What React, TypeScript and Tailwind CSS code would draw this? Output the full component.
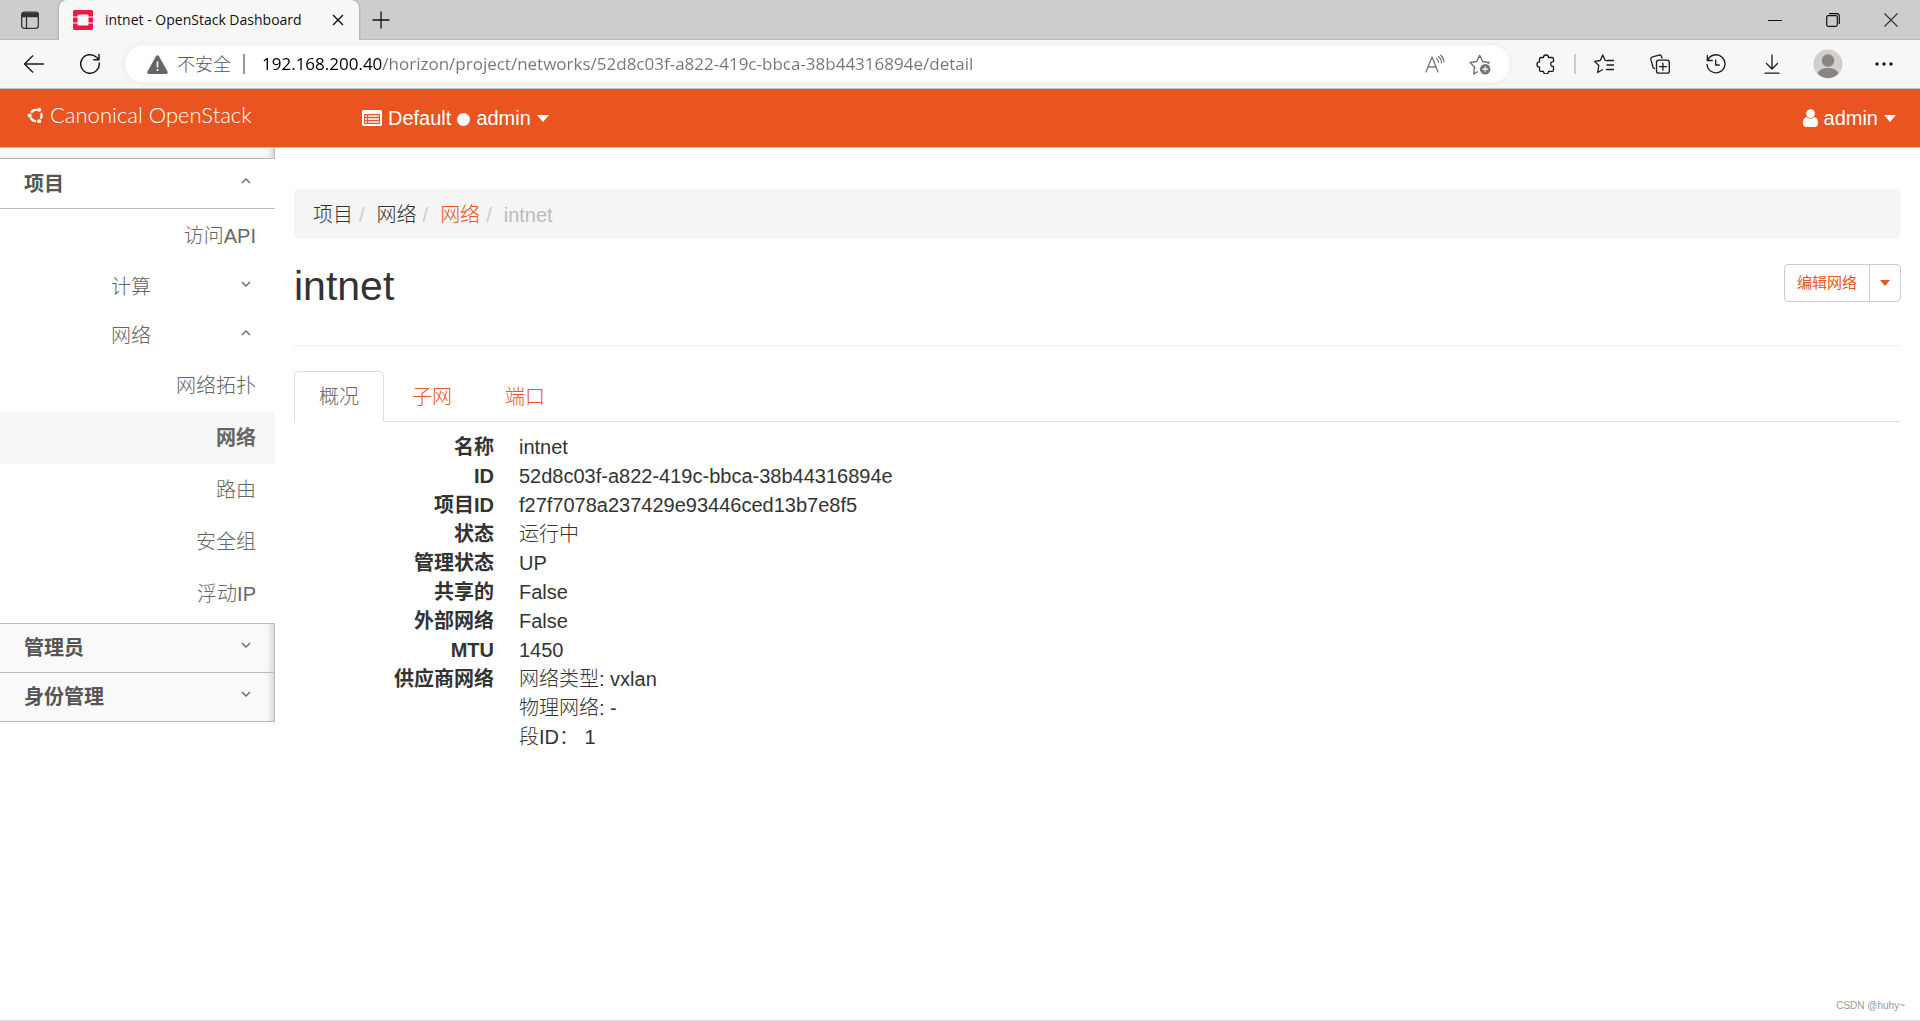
import { useState } from "react";
import type { ReactNode } from "react";
import clsx from "clsx";

interface NetworkField {
  label: string;
  values: string[];
}

const fields: NetworkField[] = [
  { label: "名称", values: ["intnet"] },
  { label: "ID", values: ["52d8c03f-a822-419c-bbca-38b44316894e"] },
  { label: "项目ID", values: ["f27f7078a237429e93446ced13b7e8f5"] },
  { label: "状态", values: ["运行中"] },
  { label: "管理状态", values: ["UP"] },
  { label: "共享的", values: ["False"] },
  { label: "外部网络", values: ["False"] },
  { label: "MTU", values: ["1450"] },
  { label: "供应商网络", values: ["网络类型: vxlan", "物理网络: -", "段ID： 1"] },
];

const networkPages = ["网络拓扑", "网络", "路由", "安全组", "浮动IP"];
const tabs = ["概况", "子网", "端口"];

function Icon({ size = 20, className, children }: { size?: number; className?: string; children: ReactNode }) {
  return (
    <svg
      width={size}
      height={size}
      viewBox="0 0 20 20"
      fill="none"
      stroke="currentColor"
      strokeWidth="1.3"
      strokeLinecap="round"
      strokeLinejoin="round"
      aria-hidden="true"
      className={clsx("shrink-0", className)}
    >
      {children}
    </svg>
  );
}

function Chevron({ up = false }: { up?: boolean }) {
  return (
    <svg width="10" height="8" viewBox="0 0 10 8" fill="none" stroke="#666" strokeWidth="1.4" aria-hidden="true">
      <path d={up ? "M1 6l4-4 4 4" : "M1 2l4 4 4-4"} />
    </svg>
  );
}

function Caret({ small = false }: { small?: boolean }) {
  return (
    <svg width={small ? 10 : 12} height={small ? 6 : 7} viewBox="0 0 12 7" fill="currentColor" aria-hidden="true">
      <path d="M0 0h12L6 7z" />
    </svg>
  );
}

function ToolbarButton({ label, children }: { label: string; children: ReactNode }) {
  return (
    <button type="button" aria-label={label} className="flex h-10 w-14 items-center justify-center">
      {children}
    </button>
  );
}

function TabStrip() {
  return (
    <div className="flex h-10 items-stretch border-b border-[#bbb] bg-[#cdcdcd]">
      <button type="button" aria-label="标签页操作" className="flex w-[59px] items-center justify-center">
        <Icon>
          <rect x="1.7" y="2.2" width="16.6" height="16.1" rx="2.6" />
          <path d="M2 3.5h16v3H2z" fill="currentColor" />
          <path d="M6.5 7v11" />
        </Icon>
      </button>
      <div className="-mb-px flex w-[300px] items-center rounded-t-lg bg-[#f7f7f7] pr-[11px] pl-3.5 shadow-[0_0_3px_rgba(0,0,0,0.3)] [clip-path:inset(0_-4px_0_-4px)]">
        <svg width="20" height="20" viewBox="0 0 20 20" fill="#ed1944" aria-hidden="true" className="shrink-0">
          <path d="M1.5 0h17A1.5 1.5 0 0 1 20 1.5V6.5h-4.500V5.500a1 1 0 0 0-1-1h-9a1 1 0 0 0-1 1v1H0V1.500A1.500 1.500 0 0 1 1.500 0z" />
          <path d="M0 7.500h4.500v5H0zM15.500 7.500H20v5h-4.500z" />
          <path d="M0 13.500h4.500v1a1 1 0 0 0 1 1h9a1 1 0 0 0 1-1v-1H20v5a1.500 1.500 0 0 1-1.500 1.500h-17A1.500 1.500 0 0 1 0 18.500z" />
        </svg>
        <span className="ml-3 flex-1 font-['Open_Sans',sans-serif] text-sm whitespace-nowrap text-[#111]">
          intnet - OpenStack Dashboard
        </span>
        <button type="button" aria-label="关闭标签页" className="flex h-5 w-5 items-center justify-center">
          <svg width="12" height="12" viewBox="0 0 12 12" stroke="#111" strokeWidth="1.4" aria-hidden="true">
            <path d="M1 1l10 10M11 1L1 11" />
          </svg>
        </button>
      </div>
      <button type="button" aria-label="新建标签页" className="flex w-[43px] items-center justify-center">
        <svg width="18" height="18" viewBox="0 0 18 18" stroke="#111" strokeWidth="1.3" aria-hidden="true">
          <path d="M9 0.5v17M0.5 9h17" />
        </svg>
      </button>
      <div className="ml-auto flex items-stretch">
        <button type="button" aria-label="最小化" className="flex w-[58px] items-center justify-center">
          <svg width="14" height="14" viewBox="0 0 14 14" stroke="#111" aria-hidden="true">
            <path d="M0 7.5h14" />
          </svg>
        </button>
        <button type="button" aria-label="还原" className="flex w-[58px] items-center justify-center">
          <svg width="14" height="14" viewBox="0 0 14 14" fill="none" stroke="#111" strokeWidth="1.2" aria-hidden="true">
            <rect x="0.7" y="2.7" width="10.6" height="10.6" rx="1.5" />
            <path d="M3 0.7h7.500a2.800 2.800 0 0 1 2.800 2.800V11" />
          </svg>
        </button>
        <button type="button" aria-label="关闭" className="flex w-[58px] items-center justify-center">
          <svg width="14" height="14" viewBox="0 0 14 14" stroke="#333" strokeWidth="1.1" aria-hidden="true">
            <path d="M0.5 0.5l13 13M13.5 0.5l-13 13" />
          </svg>
        </button>
      </div>
    </div>
  );
}

function AddressBar() {
  return (
    <div className="flex h-12 items-center bg-[#f7f7f7] pr-2 pl-1.5 text-[#1b1b1b]">
      <ToolbarButton label="后退">
        <svg width="22" height="18" viewBox="0 0 22 18" fill="none" stroke="currentColor" strokeWidth="1.4" aria-hidden="true">
          <path d="M10 0.5L1.5 9l8.500 8.500M1.500 9H21" />
        </svg>
      </ToolbarButton>
      <ToolbarButton label="刷新">
        <svg width="22" height="22" viewBox="0 0 22 22" fill="none" stroke="currentColor" strokeWidth="1.5" aria-hidden="true">
          <path d="M20.200 9.500a9.300 9.300 0 1 1-2.700-5.200l2 2M20 1v5.700h-5.700" />
        </svg>
      </ToolbarButton>
      <div className="ml-[7px] flex h-[38px] flex-1 items-center rounded-full bg-white pr-2 pl-[22px] shadow-[0_0_5px_rgba(0,0,0,0.08)]">
        <svg width="21" height="19" viewBox="0 0 21 19" aria-hidden="true" className="shrink-0">
          <path d="M9.100 1a1.600 1.600 0 0 1 2.800 0l8.600 15.600a1.600 1.600 0 0 1-1.400 2.400H1.900A1.600 1.600 0 0 1 .5 16.600z" fill="#666" />
          <path d="M10.500 6.500v6" stroke="#fff" strokeWidth="1.6" />
          <circle cx="10.5" cy="15" r="1.1" fill="#fff" />
        </svg>
        <label
          htmlFor="address"
          className="ml-[9px] pb-0.5 font-['Noto_Sans_CJK_SC',sans-serif] text-lg leading-5 font-light whitespace-nowrap text-[#555]"
        >
          不安全
        </label>
        <span className="mr-[17px] ml-3 h-5 w-0.5 bg-[#999]" />
        {/* host part is darker than the path */}
        <input
          id="address"
          type="text"
          spellCheck={false}
          defaultValue="192.168.200.40/horizon/project/networks/52d8c03f-a822-419c-bbca-38b44316894e/detail"
          className="h-7 min-w-0 flex-1 bg-linear-to-r from-black from-[121px] to-[#757575] to-[121px] bg-clip-text font-['Open_Sans',sans-serif] text-[17px] text-transparent caret-black outline-none"
        />
        <button type="button" aria-label="大声朗读" className="flex w-[45px] justify-center text-[#757575]">
          <Icon>
            <path d="M1 18L7 3l6 15M3 13h8" />
            <path d="M11.500 4.500a5 5 0 0 1 2 4M13.500 2.500a8 8 0 0 1 3 6.500M15.500 1a10 10 0 0 1 3.500 7" strokeWidth="1.1" />
          </Icon>
        </button>
        <button type="button" aria-label="收藏此页" className="flex w-[45px] justify-center text-[#757575]">
          <Icon size={22}>
            <path d="M7.500 17.200l-3.300 1.900.9-6.100L1 8.600l6-.9 2.700-5.500 2.700 5.500 6 .9-1 1" />
            <circle cx="14.7" cy="14.7" r="4.8" fill="currentColor" stroke="none" />
            <path d="M14.700 12.500v4.400M12.500 14.700h4.400" stroke="#fff" strokeWidth="1" />
          </Icon>
        </button>
      </div>
      <div className="ml-2 flex items-center">
        <ToolbarButton label="扩展">
          <Icon>
            <path d="M5 3.500h2.500a2.500 2.500 0 0 1 5 0H16a1.500 1.500 0 0 1 1.500 1.500v2.700a2.400 2.400 0 1 0 0 4.700v3.500a1.500 1.500 0 0 1-1.500 1.500h-3.500a2.500 2.500 0 0 1-5 0H5A1.500 1.500 0 0 1 3.500 15.900v-3a2.500 2.500 0 0 1 0-5V5A1.500 1.500 0 0 1 5 3.500z" />
          </Icon>
        </ToolbarButton>
        <span className="h-5 w-0.5 bg-[#ccc]" />
        <ToolbarButton label="收藏夹">
          <Icon>
            <path d="M13.500 6.500H20M13 11h7M12.500 15.500H20" />
            <path d="M13.500 6.700l-2.300-.3L8.700 1 6.300 6.500.6 7.400l4.200 4.100-1.100 7 4.500-2.700" />
          </Icon>
        </ToolbarButton>
        <ToolbarButton label="集锦">
          <Icon>
            <path d="M4.500 14.500A2.200 2.200 0 0 1 2.900 13L.9 5.600a2.200 2.200 0 0 1 1.600-2.700L9 1.100a2.200 2.200 0 0 1 2.600 1.500l.4 1.400" />
            <rect x="6.5" y="6.2" width="12.8" height="13" rx="2.200" />
            <path d="M12.900 9.200v7M9.400 12.700h7" />
          </Icon>
        </ToolbarButton>
        <ToolbarButton label="历史记录">
          <Icon>
            <path d="M1.600 6.500a9 9 0 1 1-.6 3.800M1.300 1.500v5h5M9.700 6v5h3.500" />
          </Icon>
        </ToolbarButton>
        <ToolbarButton label="下载">
          <Icon>
            <path d="M10 1v13.500M4.500 9.500l5.500 5.500 5.500-5.500M3 19.200h14" />
          </Icon>
        </ToolbarButton>
        <ToolbarButton label="用户配置">
          <svg width="30" height="30" viewBox="0 0 30 30" aria-hidden="true" className="shrink-0">
            <circle cx="15" cy="15" r="14.5" fill="#d2d0ce" />
            <circle cx="15" cy="11.5" r="6.3" fill="#8a8583" />
            <path d="M4.500 24.500c2-4 5.500-5.500 10.500-5.500s8.500 1.500 10.500 5.500a14.500 14.500 0 0 1-21 0z" fill="#8a8583" />
          </svg>
        </ToolbarButton>
        <ToolbarButton label="设置及其他">
          <svg width="18" height="4" viewBox="0 0 18 4" fill="currentColor" aria-hidden="true">
            <circle cx="2" cy="2" r="1.7" />
            <circle cx="9" cy="2" r="1.7" />
            <circle cx="16" cy="2" r="1.7" />
          </svg>
        </ToolbarButton>
      </div>
    </div>
  );
}

function NavBar() {
  return (
    <header className="flex h-[60px] items-center border-y border-[#bfbfbf] bg-[#e95420] text-xl leading-7 text-white">
      <a href="#home" className="flex w-[334px] items-center gap-1.5 pb-1.5 pl-[27px] font-['Lato',sans-serif] text-[22px] font-light">
        <svg width="17" height="17" viewBox="0 0 17 17" fill="none" stroke="#fff" aria-hidden="true">
          <circle cx="9" cy="8.5" r="5.6" strokeWidth="2.2" strokeDasharray="6.700 5.030" strokeDashoffset="3.350" />
          <circle cx="2.600" cy="8.5" r="2" fill="#fff" stroke="none" />
          <circle cx="12.200" cy="2.800" r="2" fill="#fff" stroke="none" />
          <circle cx="12.200" cy="14.200" r="2" fill="#fff" stroke="none" />
        </svg>
        Canonical OpenStack
      </a>
      <button type="button" className="ml-7 flex items-center">
        <svg width="20" height="16" viewBox="0 0 20 16" aria-hidden="true">
          <rect width="20" height="16" rx="1.5" fill="#fff" />
          <path d="M2 4h16v10H2z" fill="#e95420" />
          <path d="M3 6h2M6 6h11M3 9h2M6 9h11M3 12h2M6 12h11" stroke="#fff" strokeWidth="1.4" />
        </svg>
        <span className="ml-1.5">Default</span>
        <span className="mx-1.5 mt-0.5 h-[13px] w-[13px] rounded-full bg-white" />
        <span className="mr-1.5">admin</span>
        <Caret />
      </button>
      <button type="button" className="mr-6 ml-auto flex items-center gap-1.5">
        <svg width="15" height="18" viewBox="0 0 15 18" fill="#fff" aria-hidden="true">
          <circle cx="7.5" cy="4.6" r="4.4" />
          <path d="M3.500 8a5.600 5.600 0 0 0 8 0c2.500.4 3.500 3 3.500 6.300 0 2.400-1.300 3.700-3.200 3.700H3.200C1.300 18 0 16.700 0 14.300 0 11 1 8.400 3.500 8z" />
        </svg>
        admin
        <Caret />
      </button>
    </header>
  );
}

function PanelHeader({ title, open = false }: { title: string; open?: boolean }) {
  return (
    <button
      type="button"
      aria-expanded={open}
      className={clsx(
        "flex w-full items-center justify-between border-b border-[#bbb] pl-6 text-left font-bold text-[#555]",
        open
          ? "h-[50px] pr-6"
          : "h-[49px] border-r bg-[#f9f9f9] pr-[23px] shadow-[inset_-6px_0_6px_-4px_rgba(0,0,0,0.18)]"
      )}
    >
      {title}
      <span className="pb-1.5">
        <Chevron up={open} />
      </span>
    </button>
  );
}

function GroupHeader({ title, open = false }: { title: string; open?: boolean }) {
  return (
    <button type="button" aria-expanded={open} className="flex h-[49px] w-full items-center justify-between pr-6 pl-[111px]">
      {title}
      <span className="pb-1.5">
        <Chevron up={open} />
      </span>
    </button>
  );
}

function Sidebar() {
  return (
    <nav className="w-[275px] shrink-0 font-light text-[#666]">
      <div className="h-[11px] border-r border-b border-[#bbb] bg-[#f9f9f9] shadow-[inset_-6px_0_6px_-4px_rgba(0,0,0,0.18)]" />
      <PanelHeader title="项目" open />
      <a href="#api" className="flex h-[53px] items-center justify-end pr-[19px]">
        访问API
      </a>
      <GroupHeader title="计算" />
      <GroupHeader title="网络" open />
      <ul className="border-b border-[#bbb] pb-[3px]">
        {networkPages.map((page) => (
          <li key={page}>
            <a
              href="#network"
              className={clsx(
                "flex h-[52px] items-center justify-end pr-[19px]",
                page === "网络" && "bg-[#f7f7f7] font-bold"
              )}
            >
              {page}
            </a>
          </li>
        ))}
      </ul>
      <PanelHeader title="管理员" />
      <PanelHeader title="身份管理" />
    </nav>
  );
}

function Breadcrumb() {
  return (
    <ol className="mt-[41px] flex h-[50px] items-center rounded-[5px] bg-[#f5f5f5] px-[19px] pt-0.5 font-light text-[#333]">
      <li>项目</li>
      <li className="px-1.5 text-[#ccc]">/</li>
      <li className="pl-1.5">网络</li>
      <li className="px-1.5 text-[#ccc]">/</li>
      <li className="pl-1.5">
        <a href="#networks" className="text-[#e95420]">
          网络
        </a>
      </li>
      <li className="px-1.5 text-[#ccc]">/</li>
      <li className="pl-1.5 text-[#bbb]">intnet</li>
    </ol>
  );
}

export default function App() {
  const [activeTab, setActiveTab] = useState("概况");

  return (
    <div className="flex min-h-screen flex-col border-b border-[#dcd8ec] bg-white font-['Liberation_Sans','Noto_Sans_CJK_SC',sans-serif] text-xl leading-7 text-[#333]">
      <TabStrip />
      <AddressBar />
      <NavBar />
      <div className="flex flex-1">
        <Sidebar />
        <main className="min-w-0 flex-1 px-[19px]">
          <Breadcrumb />
          <div className="flex h-[107px] items-start justify-between border-b border-[#eee]">
            <h1 className="pt-6 text-[41px] leading-[46px]">intnet</h1>
            <div className="mt-[25px] flex h-[38px] rounded-[4px] border border-[#ccc] text-[15px] text-[#e95420]">
              <button type="button" className="px-3">
                编辑网络
              </button>
              <button type="button" aria-label="更多操作" className="flex w-[31px] items-center justify-center border-l border-[#ccc]">
                <Caret small />
              </button>
            </div>
          </div>
          <div role="tablist" className="mt-[25px] flex gap-[3px] border-b border-[#ddd] font-light">
            {tabs.map((tab) => (
              <button
                key={tab}
                type="button"
                role="tab"
                aria-selected={tab === activeTab}
                onClick={() => setActiveTab(tab)}
                className={clsx(
                  "-mb-px h-[51px] rounded-t-[5px] border px-6",
                  tab === activeTab ? "border-[#ddd] border-b-white bg-white text-[#666]" : "border-transparent text-[#e95420]"
                )}
              >
                {tab}
              </button>
            ))}
          </div>
          <dl className="mt-[11px] grid grid-cols-[200px_1fr] gap-x-[25px] leading-[29px] font-light">
            {fields.map((field) => (
              <div key={field.label} className="contents">
                <dt className="text-right font-bold">{field.label}</dt>
                <dd>
                  {field.values.map((value) => (
                    <p key={value}>{value}</p>
                  ))}
                </dd>
              </div>
            ))}
          </dl>
        </main>
      </div>
      <footer className="pr-[15px] pb-1.5 text-right text-[10px] leading-4 text-[#999]">CSDN @huhy~</footer>
    </div>
  );
}
